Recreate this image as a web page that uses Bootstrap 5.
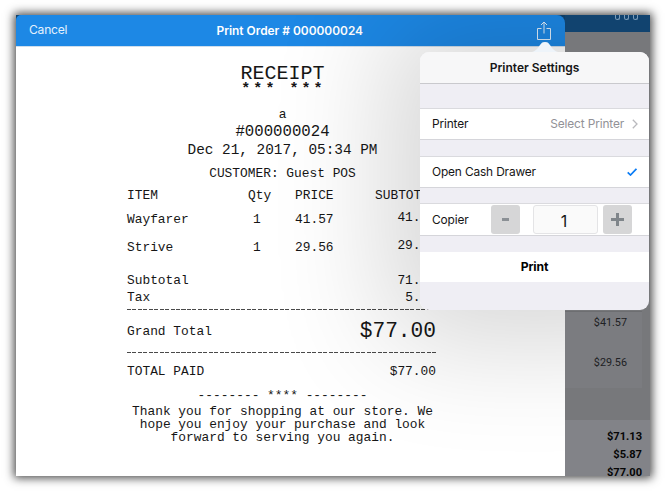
<!DOCTYPE html>
<html lang="en">
<head>
<meta charset="utf-8">
<meta name="viewport" content="width=device-width, initial-scale=1">
<title>Print Order</title>
<link rel="stylesheet" href="https://cdn.jsdelivr.net/npm/bootstrap@5.3.0/dist/css/bootstrap.min.css">
<style>
body{background:#fff;font-family:Inter,"Liberation Sans",sans-serif;color:#111;font-size:12px;line-height:1;overflow:hidden}
.stage{padding:15px 16px}
.screen{width:634px;height:461px;background:#77787b;box-shadow:0 0 9px 2px rgba(0,0,0,.72)}
.clip{height:461px;overflow:hidden}
.sheet-wrap{width:548.5px;background:#11436f;position:relative;overflow:hidden}
.sheet-top{height:31px;background:#1d88e5;color:#fff;border-radius:5px 8px 0 0;padding:0 13px}
.sheet-top .cancel{font-size:12.1px;color:#e4f1fd;width:60px;letter-spacing:-.25px}
.sheet-top .ttl{font-size:11.9px;font-weight:600;margin-right:1px}
.sheet-top .share{width:60px}
.paper{background:#fff;border-top:1px solid #cfdeec;padding:15px 0 0 111px;height:430px}
.receipt{width:311px;font-family:"Courier New","Liberation Mono",monospace;font-size:12.87px;color:#161616}
.ln{display:flex;align-items:center;justify-content:center;white-space:pre}
.ln.split{justify-content:space-between;padding-right:2px}
.h13{height:13px;line-height:13px}.h15{height:15px}.h16{height:16px}.h18{height:18px}.h20{height:20px}
.receipt .stars{font-size:15px;letter-spacing:3.05px;font-weight:700;padding-left:2px;line-height:13px}
.cols{display:grid;grid-template-columns:121px 47px 80px 1fr;align-items:center;height:18px;white-space:pre}
.cols .num{padding-left:5px}
.cols .amt{text-align:right;padding-right:2px;margin-top:-4px}
.f20{font-size:20px}.f157{font-size:15.7px}.f144{font-size:14.4px}.f21{font-size:21.2px}
.gap3{margin-top:3px}.gap5{margin-top:5px}.gap6{margin-top:6px}.gap10{margin-top:10px}.gap12{margin-top:12px}.gap15{margin-top:15px}
.rule{height:1px;background:repeating-linear-gradient(90deg,#4a4a4a 0 4px,transparent 4px 5.45px)}
.side{flex:1;font-family:Roboto,sans-serif;color:#202124}
.side-nav{height:17px;background:#11436f;overflow:hidden;padding-right:12px;gap:4px}
.side-nav span{width:5px;height:5px;border:1px solid #7c9dba;border-top:0;border-radius:0 0 3px 3px}
.side-items{margin:279px 8px 32px 0;height:77px;background:#7b7c80;border-top:1px solid #6d6e71;padding:4px 15px 0 0;text-align:right;font-size:10.8px}
.side-items div{height:40px;line-height:13px}
.side-sum{height:56px;overflow:hidden;background:#828388;color:#060606;font-weight:700;text-align:right;padding:8px 8px 0 0;font-size:11.1px;line-height:18px}
.glow{position:absolute;left:404px;top:37px;width:229px;height:258px;border-radius:9px;box-shadow:0 0 115px 34px rgba(0,0,0,.16)}
.pop{position:absolute;left:420px;top:52px;width:229px;height:258px;border-radius:9px;background:#efeef4;color:#161616}
.pop .arrow{position:absolute;left:112px;top:-10px}
.pop-head{height:32px;background:#f7f7f8;border-radius:9px 9px 0 0;border-bottom:1px solid #c9c9cd;font-weight:600;font-size:12px;padding-top:1px}
.opt{background:#fff;border-top:1px solid #dadade;border-bottom:1px solid #d5d5da;padding:0 12px;font-size:11.9px;letter-spacing:-.15px}
.opt-1{margin-top:24px;height:32px;padding-right:11px}
.opt-2{margin-top:16px;height:32px}
.opt-3{margin-top:15px;height:33px;padding-right:13px}
.opt-4{margin-top:16px;height:30px;border:0;font-weight:700;font-size:12.2px;color:#000;padding-top:1px}
.hint{color:#929297}
.step{width:29px;height:29px;border-radius:3px;background:#d6d6d7}
.count{width:65px;height:29px;border-radius:3px;background:#fafafa;border:1px solid #e4e4e6;font-size:16px;margin:0 5px 0 13px;padding:2px 3px 0 0}
</style>
</head>
<body>
<div class="stage">
  <main class="screen">
    <div class="clip d-flex">
      <section class="sheet-wrap">
        <header class="sheet-top d-flex align-items-center justify-content-between">
          <span class="cancel">Cancel</span>
          <span class="ttl">Print Order # 000000024</span>
          <span class="share d-flex justify-content-end">
            <svg width="16" height="20" viewBox="0 0 16 20" fill="none" stroke="#e0effc"><path d="M5.500 7.500H1.500v11h13v-11h-4M8 12.500V1M5 4l3-3 3 3"/></svg>
          </span>
        </header>
        <div class="paper">
          <div class="receipt">
            <div class="ln h20 f20 pt-1">RECEIPT</div>
            <div class="ln h15 stars">*** ***</div>
            <div class="ln h16 mt-2 pt-1">a</div>
            <div class="ln h18 gap3 f157">#000000024</div>
            <div class="ln h16 f144">Dec 21, 2017, 05:34 PM</div>
            <div class="ln h20 gap6">CUSTOMER: Guest POS</div>
            <div class="cols gap3"><span>ITEM</span><span>Qty</span><span>PRICE</span><span class="amt mt-0">SUBTOTAL</span></div>
            <div class="cols gap6"><span>Wayfarer</span><span class="num">1</span><span>41.57</span><span class="amt">41.57</span></div>
            <div class="cols gap10"><span>Strive</span><span class="num">1</span><span>29.56</span><span class="amt">29.56</span></div>
            <div class="ln split h18 gap15"><span>Subtotal</span><span>71.13</span></div>
            <div class="ln split h16"><span>Tax</span><span>5.87</span></div>
            <div class="rule gap3"></div>
            <div class="ln split h20 gap12"><span>Grand Total</span><span class="f21">$77.00</span></div>
            <div class="rule gap10"></div>
            <div class="ln split h18 gap10"><span>TOTAL PAID</span><span>$77.00</span></div>
            <div class="ln h13 mt-2"><span>-------- </span><span>****</span><span> --------</span></div>
            <div class="ln h13 gap3">Thank you for shopping at our store. We</div>
            <div class="ln h13">hope you enjoy your purchase and look</div>
            <div class="ln h13">forward to serving you again.</div>
          </div>
        </div>
        <div class="glow"></div>
      </section>
      <aside class="side">
        <div class="side-nav d-flex justify-content-end"><span></span><span></span><span></span></div>
        <div class="side-items"><div>$41.57</div><div>$29.56</div></div>
        <div class="side-sum"><div>$71.13</div><div>$5.87</div><div>$77.00</div></div>
      </aside>
    </div>
  </main>
</div>
<section class="pop">
  <svg class="arrow" width="26" height="10" viewBox="0 0 26 10"><path d="M0 10C6 9 8 1 11 .3Q13-.3 15 .3C18 1 20 9 26 10z" fill="#eef4fa"/></svg>
  <div class="pop-head d-flex align-items-center justify-content-center">Printer Settings</div>
  <div class="opt opt-1 d-flex align-items-center"><span>Printer</span><span class="hint ms-auto">Select Printer</span>
    <svg class="ms-2" width="6" height="10" viewBox="0 0 6 10" fill="none" stroke="#b9b9bd" stroke-width="1.300"><path d="M.8.8L5 5 .8 9.200"/></svg></div>
  <div class="opt opt-2 d-flex align-items-center"><span>Open Cash Drawer</span>
    <svg class="ms-auto" width="10" height="8" viewBox="0 0 10 8" fill="none" stroke="#0a7cf5" stroke-width="1.700"><path d="M.7 4.300L3.500 7 9.400.8"/></svg></div>
  <div class="opt opt-3 d-flex align-items-center"><span class="flex-grow-1">Copier</span>
    <span class="step d-flex align-items-center justify-content-center"><svg width="7" height="3"><rect width="7" height="3" fill="#8b9095"/></svg></span>
    <span class="count d-flex align-items-center justify-content-center">1</span>
    <span class="step d-flex align-items-center justify-content-center me-1"><svg width="13" height="13"><path d="M5 0h3v5h5v3H8v5H5V8H0V5h5z" fill="#7f858a"/></svg></span></div>
  <div class="opt opt-4 d-flex align-items-center justify-content-center">Print</div>
</section>
<script src="https://cdn.jsdelivr.net/npm/bootstrap@5.3.0/dist/js/bootstrap.bundle.min.js"></script>
</body>
</html>
